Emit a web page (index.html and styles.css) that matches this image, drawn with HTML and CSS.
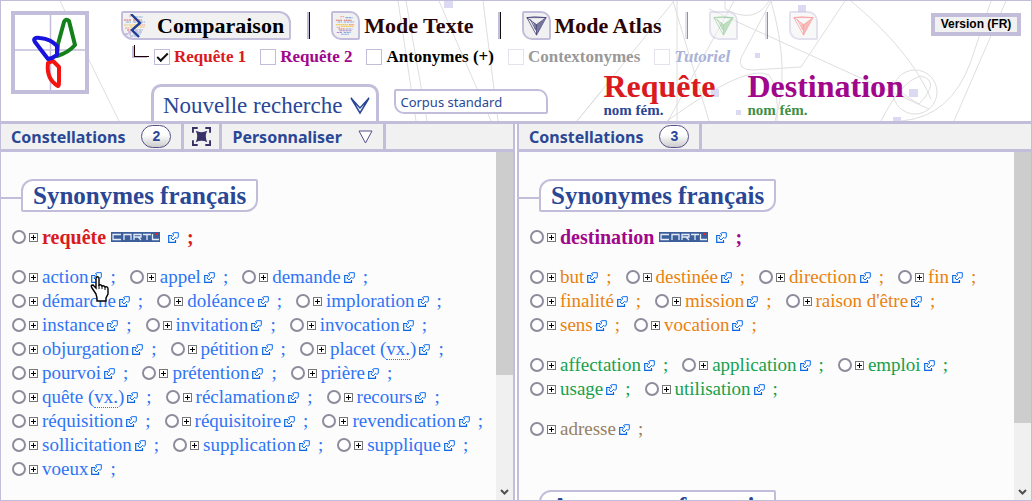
FILE: index.html
```html
<!DOCTYPE html>
<html lang="fr">
  <head>
    <meta charset="UTF-8" />
    <meta name="viewport" content="width=device-width" />
    <title>Comparaison : requête / destination</title>
    <link rel="stylesheet" href="styles.css">
  </head>
  <body>
    <!-- Shared icons -->
    <svg class="defs" aria-hidden="true">
      <symbol id="ext" viewBox="0 0 11 11">
        <path d="M4 3.500H.7v6.800h6.800V8" fill="none" stroke="#0a66e0" stroke-width="1.200" />
        <path d="M4.500 1.500 6 .7h4.300V5L9 6.500 7.700 5.200 5 8 2.800 5.800 5.800 3Z" fill="#fff" stroke="#0a6cf0" />
      </symbol>
      <symbol id="plus" viewBox="0 0 9 9">
        <rect x=".5" y=".5" width="8" height="8" fill="#fff" stroke="#777" />
        <path d="M2 4.500h5M4.500 2v5" stroke="#000" />
      </symbol>
      <symbol id="atlas" viewBox="0 0 24 24">
        <path d="M1 3h22L12 23ZM1 3l11 8 11-8M12 11v12M5 5l6 12M1 3l9-1 13 1" fill="none" stroke="currentColor" stroke-width=".8" />
        <path d="M12 11 22 4l-8 15-2 3ZM8 8l4 3-1 7Z" fill="currentColor" opacity=".65" />
      </symbol>
      <symbol id="cloud" viewBox="0 0 24 24">
        <g fill="none" stroke-width="1.200">
          <path d="M6 2h5M16 11h6M2 14h4" stroke="#e8a08a" stroke-dasharray="2 .5" />
          <path d="M12 3h8M3 8h5M10 20h8" stroke="#7fb0dc" stroke-dasharray="3 .6" />
          <path d="M1 6h7M10 6h9M4 16h7" stroke="#e06a5c" stroke-dasharray="2 .5" />
          <path d="M10 8h12M12 16h8M7 22h9" stroke="#8fa8dc" stroke-dasharray="3 .6" />
          <path d="M1 11h14M7 13h15" stroke="#edc860" stroke-dasharray="2 .5" />
          <path d="M5 18h14M2 20h6" stroke="#a98fd4" stroke-dasharray="3 .6" />
        </g>
      </symbol>
      <symbol id="cnrtl" viewBox="0 0 49 10">
        <path d="M0 0h49v10H0Z" fill="#3c5f9c" />
        <path d="M10 2.500H2v5h8M13 8V2.500h7V8M23 8V2.500h7V5h-7m4 0 3 3M32 2.500h8M36 3v5M41.500 2V7.500H48" fill="none" stroke="#e4ebf5" stroke-width="1.300" />
        <path d="M45 1h2v2h-2Z" fill="#e22" />
      </symbol>
    </svg>

    <header>
      <svg class="sky" viewBox="0 0 1030 120" preserveAspectRatio="xMinYMin slice" aria-hidden="true">
        <g fill="none" stroke="#dedede">
          <path d="M59 0 118 120M397 0l18 120M405 0l21 120M438 0l52 120M482 0l15 120M576 120 600 91" />
          <path d="M576 120 673 0M676 0v120M672 0l36 120M733 0 667 120M724 0v8q30 16 44-8M770 0 740 57q-4 12 12 12l48-3 44-66M770 0q20 70 4 120M708 8l220 100M850 0q60 50 80 98M666 120q80-58 102-46 10 12 8 46M990 0l-20 60q-20 56-70 60M1005 0l-52 120M880 120q20-40 40-45 20 5-2 28-20-10-26-24" />
          <circle cx="914" cy="91" r="22" />
        </g>
        <path d="M443 0h9v7h-9ZM797 4h8v7h-8ZM754 52h5v5h-5ZM710 88h8v8h-8ZM735 109h5v5h-5ZM908 88h9v8h-9ZM892 116h8v4h-8Z" fill="#dcdaf2" />
      </svg>

      <a class="logo" href="#" aria-label="Accueil">
        <svg viewBox="0 0 70 75">
          <path d="M35.500 0v75M0 35h70" stroke="#c2bddb" stroke-width="1.500" />
          <g fill="none" stroke-width="4" stroke-linejoin="round">
            <path d="M43 29 49 7q2-4 5-1l6 24q-7 8-18 11Z" stroke="#14801c" />
            <path d="M33 48q-2 16 10 23 1 0 1-4V52l-6-6Z" stroke="#f5130f" />
            <path d="M33 44 20 27q-3-5 5-4 11 1 17 8v9l-5 3Z" stroke="#1712dd" />
          </g>
        </svg>
      </a>

      <div class="menu">
        <nav class="modes">
          <a class="mode current" href="#">
            <svg class="mode-icon" viewBox="0 0 24 24">
              <use href="#cloud" />
              <path d="M8 0l9 9-8 7 7 7" fill="none" stroke="#1f3f94" stroke-width="2.400" />
            </svg>
            Comparaison
          </a>
          <a class="mode" href="#"><span class="tile"><svg class="mode-icon"><use href="#cloud" /></svg></span>Mode Texte</a>
          <a class="mode" href="#"><span class="tile"><svg class="mode-icon navy"><use href="#atlas" /></svg></span>Mode Atlas</a>
          <a class="mode off" href="#" aria-label="Atlas vert"><span class="tile"><svg class="mode-icon green"><use href="#atlas" /></svg></span></a>
          <a class="mode off" href="#" aria-label="Atlas rouge"><span class="tile"><svg class="mode-icon red"><use href="#atlas" /></svg></span></a>
        </nav>

        <div class="options">
          <span class="corner"></span>
          <label class="red"><input type="checkbox" checked>Requête 1</label>
          <label class="purple"><input type="checkbox">Requête 2</label>
          <label><input type="checkbox">Antonymes (+)</label>
          <label class="disabled"><input type="checkbox" disabled>Contextonymes</label>
          <label class="disabled tutorial"><input type="checkbox" disabled>Tutoriel</label>
        </div>

        <div class="search">
          <button class="new-search" type="button">
            Nouvelle recherche
            <svg viewBox="0 0 20 18"><path d="m1 1 9 15 9-15-9 10Z" fill="#fff" stroke="#2a4796" stroke-width="1.500" /></svg>
          </button>
          <select class="corpus" aria-label="Corpus">
            <option>Corpus standard</option>
          </select>
          <div class="words">
            <div class="word"><h1 class="red">Requête</h1><p class="blue">nom fém.</p></div>
            <div class="word"><h1 class="purple">Destination</h1><p class="green">nom fém.</p></div>
          </div>
        </div>
      </div>

      <button class="version" type="button">Version (FR)</button>
    </header>

    <main>
      <section class="pane">
        <div class="bar">
          <button class="bar-item" type="button">Constellations <span class="count">2</span></button>
          <button class="bar-item icon-only" type="button" aria-label="Plein écran">
            <svg viewBox="0 0 20 20">
              <path d="M1 6V1h5M14 1h5v5M19 14v5h-5M6 19H1v-5" fill="none" stroke="#373367" stroke-width="2" />
              <path d="M4 4q6 3 12 0-3 6 0 12-6-3-12 0 3-6 0-12Z" fill="#373367" />
            </svg>
          </button>
          <button class="bar-item" type="button">
            Personnaliser
            <svg class="down" viewBox="0 0 15 14"><path d="M1 1h13L7.500 13Z" fill="#fff" stroke="#55508a" /></svg>
          </button>
        </div>
        <div class="body">
          <div class="content">
            <h2>Synonymes français</h2>
            <ul class="words-list headword red" data-words="requête"></ul>
            <ul class="words-list azure" data-words="action,appel,demande,démarche,doléance,imploration,instance,invitation,invocation,objurgation,pétition,placet (vx.),pourvoi,prétention,prière,quête (vx.),réclamation,recours,réquisition,réquisitoire,revendication,sollicitation,supplication,supplique,voeux"></ul>
          </div>
          <div class="scroll"><span class="thumb"></span><svg viewBox="0 0 9 6"><path d="m1 1 3.500 3.500L8 1" /></svg></div>
        </div>
      </section>

      <section class="pane">
        <div class="bar">
          <button class="bar-item" type="button">Constellations <span class="count">3</span></button>
        </div>
        <div class="body">
          <div class="content">
            <h2>Synonymes français</h2>
            <ul class="words-list headword purple" data-words="destination"></ul>
            <ul class="words-list orange" data-words="but,destinée,direction,fin,finalité,mission,raison d'être,sens,vocation"></ul>
            <ul class="words-list emerald" data-words="affectation,application,emploi,usage,utilisation"></ul>
            <ul class="words-list brown" data-words="adresse"></ul>
            <h2 class="next">Antonymes français</h2>
          </div>
          <div class="scroll"><span class="thumb long"></span><svg viewBox="0 0 9 6"><path d="m1 1 3.500 3.500L8 1" /></svg></div>
        </div>
      </section>
    </main>

    <script src="script.js"></script>
  </body>
</html>
```
FILE: styles.css
```css
*,
*::before {
  box-sizing: border-box;
}

body {
  margin: 0;
  height: 100vh;
  display: flex;
  flex-direction: column;
  border: 1px solid #c2bddb;
  background: #fff;
  font-family: "Liberation Serif", "Times New Roman", serif;
  overflow: hidden;
}

h1, h2, p, ul {
  margin: 0;
  padding: 0;
}

a {
  color: inherit;
  text-decoration: none;
}

button, select {
  font: inherit;
  color: inherit;
}

.defs {
  position: absolute;
  width: 0;
  height: 0;
}

.red { color: #d91a1e; }
.purple { color: #a0078a; }
.blue { color: #2a4796; }
.green { color: #3f8f45; }
.navy { color: #35346f; }
.azure { color: #2f74f5; }
.orange { color: #e8820e; }
.emerald { color: #17a04c; }
.brown { color: #97805f; }

/* Header */
header {
  position: relative;
  display: flex;
  align-items: flex-start;
  padding: 10px 10px 0;
}

.sky {
  position: absolute;
  top: 0;
  left: 0;
  width: 100%;
  height: 100%;
}

.logo,
.menu,
.version {
  position: relative;
}

.logo {
  width: 78px;
  height: 83px;
  border: 4px solid #c2bddb;
  background: #fff;
  margin-right: 32px;
}

.logo svg {
  display: block;
}

.menu {
  flex: 1;
}

.modes {
  display: flex;
}

.mode {
  display: flex;
  align-items: center;
  gap: 4px;
  height: 29px;
  color: #2b0505;
  font-size: 22px;
  font-weight: bold;
}

.mode + .mode::before {
  content: "";
  width: 3px;
  height: 27px;
  margin: 0 17px 0 24px;
  border-right: 1px solid #111;
  background: #c2bddb;
}

.mode.current {
  gap: 10px;
  padding: 0 5px 0 0;
  border: 2px solid #c2bddb;
  border-radius: 2px 12px 2px 12px;
  background: #f1f1f1;
  color: #000;
}

.mode.current + .mode::before {
  margin-left: 16px;
}

.mode.off + .mode.off::before {
  margin-left: 27px;
}

.tile {
  display: flex;
  width: 29px;
  height: 29px;
  padding: 2px;
  border: 2px solid #c2bddb;
  border-radius: 2px 10px 2px 10px;
  background: #f1f1f1;
}

.mode-icon {
  width: 24px;
  height: 24px;
}

.tile .mode-icon {
  width: 21px;
  height: 21px;
}

.mode.off {
  opacity: 0.45;
}

.mode-icon.green { color: #2b9a33; }
.mode-icon.red { color: #f01c1c; }

.options {
  display: flex;
  align-items: center;
  gap: 14px;
  height: 22px;
  margin-top: 6px;
  padding-left: 13px;
  font-size: 17px;
  font-weight: bold;
}

.corner {
  width: 15px;
  height: 12px;
  margin: 0 -9px 12px 0;
  border-left: 1px solid #200;
  border-bottom: 1px solid #200;
  box-shadow: -2px 1px #c2bddb;
}

.options label {
  display: flex;
  align-items: center;
  gap: 4px;
}

.options input {
  appearance: none;
  width: 16px;
  height: 16px;
  margin: 0;
  border: 1px solid #c2bddb;
  background: #fff;
}

.options input:checked::before {
  content: "";
  display: block;
  width: 11px;
  height: 6px;
  margin: 3px 2px;
  border-left: 2px solid #111;
  border-bottom: 2px solid #111;
  transform: rotate(-45deg);
}

.options .disabled {
  color: #999;
}

.options .tutorial {
  color: #a9b3d8;
  font-style: italic;
}

.options .disabled input {
  border-color: #e4e2ef;
}

.search {
  display: flex;
  align-items: flex-end;
  height: 53px;
  padding-left: 30px;
}

.new-search {
  display: flex;
  align-items: center;
  gap: 8px;
  height: 37px;
  padding: 4px 6px 0 9px;
  border: 3px solid #c2bddb;
  border-bottom: 0;
  border-radius: 10px 10px 0 0;
  background: #fff;
  color: #2a4796;
  font-size: 23px;
  white-space: nowrap;
}

.new-search svg {
  width: 20px;
  height: 18px;
}

.corpus {
  appearance: none;
  width: 154px;
  height: 25px;
  margin: 0 55px 7px 15px;
  padding: 0 4px;
  border: 2px solid #c2bddb;
  border-radius: 2px 10px 2px 10px;
  background: #fff;
  color: #2a4796;
  font-family: "Noto Sans", sans-serif;
  font-size: 13px;
}

.words {
  display: flex;
  gap: 32px;
  padding-bottom: 3px;
}

.word h1 {
  font-size: 32px;
  line-height: 32px;
}

.word p {
  font-size: 15px;
  font-weight: bold;
  line-height: 16px;
}

.version {
  width: 90px;
  height: 23px;
  margin-top: 2px;
  padding: 0;
  border: 4px solid #c2bddb;
  background: #f1f1f1;
  color: #000;
  font-family: "Liberation Sans", Arial, sans-serif;
  font-size: 12px;
  font-weight: bold;
  line-height: 15px;
}

/* Panes */
main {
  flex: 1;
  display: flex;
  gap: 2px;
  min-height: 0;
  border-top: 3px solid #c2bddb;
}

.pane {
  flex: 1;
  display: flex;
  flex-direction: column;
  min-width: 0;
}

.pane:first-child {
  border-right: 2px solid #c2bddb;
}

.pane + .pane {
  border-left: 2px solid #c2bddb;
}

.bar {
  display: flex;
  height: 28px;
  border-bottom: 3px solid #c2bddb;
  background: #f1f1f1;
}

.bar-item {
  display: flex;
  align-items: center;
  gap: 16px;
  padding: 0 10px;
  border: 0;
  border-right: 3px solid #c2bddb;
  background: none;
  color: #2a4796;
  font-family: "Noto Sans", sans-serif;
  font-size: 16px;
  font-weight: bold;
}

.icon-only {
  padding: 0 8px;
}

.icon-only svg {
  width: 19px;
  height: 19px;
}

.down {
  width: 15px;
  height: 14px;
}

.count {
  width: 30px;
  height: 23px;
  border: 1px solid #55508a;
  border-radius: 12px;
  background: linear-gradient(#fff 40%, #ccc);
  font-family: "Liberation Sans", Arial, sans-serif;
  font-size: 14px;
  line-height: 21px;
  text-align: center;
}

.body {
  flex: 1;
  display: flex;
  min-height: 0;
  background: #fcfcfc;
}

.content {
  flex: 1;
  padding-top: 27px;
  overflow: hidden;
}

.content h2 {
  position: relative;
  width: fit-content;
  height: 33px;
  margin-left: 20px;
  padding: 0 10px;
  border: 2px solid #c2bddb;
  border-radius: 12px 2px 12px 2px;
  background: #fff;
  color: #2a4796;
  font-size: 25px;
  line-height: 30px;
}

.content h2::before {
  content: "";
  position: absolute;
  top: 16px;
  left: -22px;
  width: 20px;
  height: 2px;
  background: #c2bddb;
}

.words-list {
  display: flex;
  flex-wrap: wrap;
  column-gap: 14px;
  margin: 0 0 16px 11px;
  list-style: none;
  font-size: 19px;
  line-height: 24px;
}

.headword {
  margin-top: 13px;
  font-size: 20px;
  font-weight: bold;
}

.words-list li {
  position: relative;
  display: flex;
  align-items: center;
  height: 24px;
  white-space: nowrap;
}

.words-list input {
  appearance: none;
  width: 14px;
  height: 14px;
  margin: 0 3px 0 0;
  border: 2px solid #8e8b9c;
  border-radius: 50%;
  background: #fff;
}

.words-list .plus {
  width: 9px;
  height: 9px;
  margin-right: 4px;
}

.words-list .ext {
  width: 11px;
  height: 11px;
  margin: 0 8px 0 3px;
}

.words-list .cnrtl {
  width: 49px;
  height: 10px;
  margin: 0 5px 0 5px;
}

.words-list abbr {
  text-decoration: none;
  border-bottom: 1px dotted;
}

.hand {
  position: absolute;
  top: 11px;
  left: 78px;
  z-index: 1;
  width: 19px;
  height: 26px;
}

.content .next {
  margin-top: 49px;
}

.scroll {
  display: flex;
  flex-direction: column;
  align-items: center;
  justify-content: space-between;
  width: 17px;
  padding-bottom: 5px;
  background: #f0f0f0;
}

.thumb {
  width: 100%;
  height: 65%;
  background: #cdcdcd;
}

.thumb.long {
  height: 79%;
}

.scroll svg {
  width: 9px;
  height: 6px;
  fill: none;
  stroke: #505050;
  stroke-width: 2;
}
```
FILE: script.js
```js
const hand = `<svg class="hand" viewBox="0 0 19 26">
  <path d="M6 18 2 12q-2-3 1-3l3 3V3q0-3 2-2 1 0 1 2v6q2-1 3 1 2-1 3 1 3-1 3 2v5l-2 4v3H7v-3Z" fill="#fff" stroke="#000" stroke-width="1.400"/>
  <path d="M9 9v4M12 10v3M15 11v3" stroke="#000"/>
</svg>`;

// Fill every list from its comma separated words
document.querySelectorAll(".words-list").forEach((list) => {
  const isHead = list.classList.contains("headword");

  list.innerHTML = list.dataset.words
    .split(",")
    .map((word) => {
      const label = word.replace("vx.", "<abbr>vx.</abbr>");
      return `
        <li>
          <input type="radio" name="word" aria-label="${word}">
          <svg class="plus"><use href="#plus" /></svg>
          <a href="#">${label}</a>
          ${isHead ? '<svg class="cnrtl"><use href="#cnrtl" /></svg>' : ""}
          <svg class="ext"><use href="#ext" /></svg>
          <span>;</span>
          ${word === "action" ? hand : ""}
        </li>`;
    })
    .join("");
});
```
